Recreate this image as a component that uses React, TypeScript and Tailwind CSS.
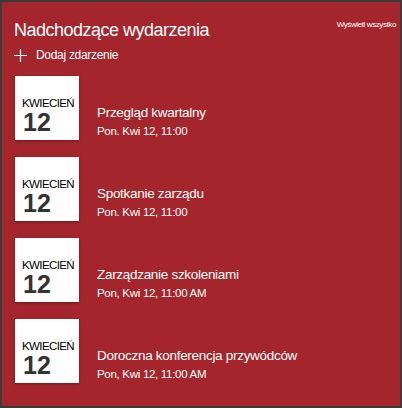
import React from 'react';

interface EventItem {
  title: string;
  date: string;
}

const events: EventItem[] = [
  { title: 'Przegląd kwartalny', date: 'Pon. Kwi 12, 11:00' },
  { title: 'Spotkanie zarządu', date: 'Pon. Kwi 12, 11:00' },
  { title: 'Zarządzanie szkoleniami', date: 'Pon, Kwi 12, 11:00 AM' },
  { title: 'Doroczna konferencja przywódców', date: 'Pon, Kwi 12, 11:00 AM' },
];

const DateTile: React.FC = () => (
  <div className="w-16 h-16 shrink-0 bg-white shadow-[0_1px_3px_rgba(0,0,0,0.35)] flex flex-col pl-[7px] pt-[21px]">
    <span className="text-[11.5px] leading-[13px] text-black tracking-[-0.6px]">KWIECIEŃ</span>
    <span className="text-[25px] leading-[24px] font-bold text-[#333333] pl-[1px]">12</span>
  </div>
);

export default function App() {
  return (
    <div
      className="w-[402px] h-[408px] border-2 border-[#3b3b3b] bg-[#a4262c] text-white flex flex-col"
      style={{ fontFamily: '"Liberation Sans", Arial, sans-serif' }}
    >
      {/* Header */}
      <div className="flex items-start justify-between pl-[12px] pr-[4px] pt-[16px]">
        <h2 className="text-[18px] leading-[24px] tracking-[-0.5px]">Nadchodzące wydarzenia</h2>
        <a className="text-[8px] leading-[10px] mt-[2px] tracking-[-0.4px]">Wyświetl wszystko</a>
      </div>

      <button className="flex items-center gap-[8px] pl-[11px] mt-[5px] text-[12px] leading-[16px] tracking-[-0.3px] text-left">
        <svg width="15" height="15" viewBox="0 0 15 15" className="shrink-0">
          <path d="M7.5 1v13M1 7.5h13" stroke="white" strokeWidth="1.2" />
        </svg>
        <span>Dodaj zdarzenie</span>
      </button>

      {/* List */}
      <div className="flex flex-col gap-[17px] pl-[13px] mt-[13px]">
        {events.map((ev) => (
          <div key={ev.title} className="flex items-start gap-[18px]">
            <DateTile />
            <div className="flex flex-col pt-[28px]">
              <span className="text-[13.5px] leading-[18px] tracking-[-0.3px]">{ev.title}</span>
              <span className="text-[11.5px] leading-[16px] mt-[1px] tracking-[-0.3px]">{ev.date}</span>
            </div>
          </div>
        ))}
      </div>
    </div>
  );
}
